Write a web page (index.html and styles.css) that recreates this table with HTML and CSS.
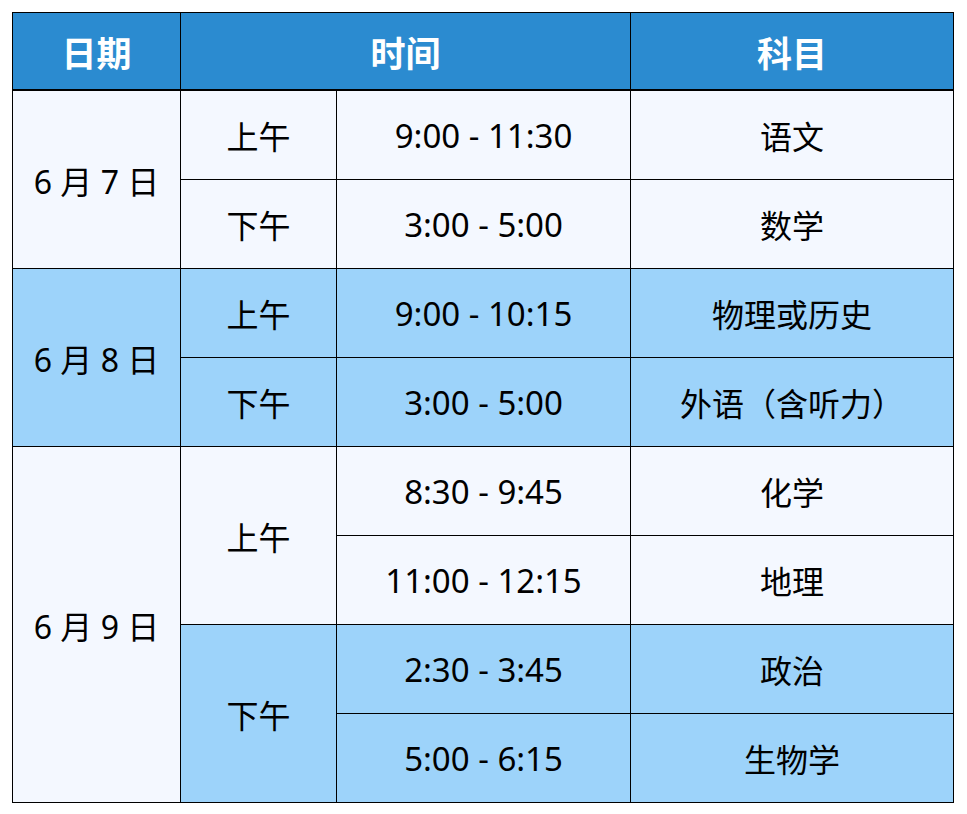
FILE: index.html
```html
<!DOCTYPE html>
<html lang="zh-CN">
<head>
<meta charset="utf-8">
<link rel="stylesheet" href="styles.css">
</head>
<body>
<div class="wrap">
<table class="sched">
  <colgroup>
    <col class="c1"><col class="c2"><col class="c3"><col class="c4">
  </colgroup>
  <thead>
    <tr class="head"><th>日期</th><th colspan="2">时间</th><th>科目</th></tr>
  </thead>
  <tbody>
    <tr><td class="light" rowspan="2">6 月 7 日</td><td class="light">上午</td><td class="light num">9:00 - 11:30</td><td class="light">语文</td></tr>
    <tr><td class="light">下午</td><td class="light num">3:00 - 5:00</td><td class="light">数学</td></tr>
    <tr><td class="blue" rowspan="2">6 月 8 日</td><td class="blue">上午</td><td class="blue num">9:00 - 10:15</td><td class="blue">物理或历史</td></tr>
    <tr><td class="blue">下午</td><td class="blue num">3:00 - 5:00</td><td class="blue">外语（含听力）</td></tr>
    <tr><td class="light" rowspan="4">6 月 9 日</td><td class="light" rowspan="2">上午</td><td class="light num">8:30 - 9:45</td><td class="light">化学</td></tr>
    <tr><td class="light num">11:00 - 12:15</td><td class="light">地理</td></tr>
    <tr><td class="blue" rowspan="2">下午</td><td class="blue num">2:30 - 3:45</td><td class="blue">政治</td></tr>
    <tr><td class="blue num">5:00 - 6:15</td><td class="blue">生物学</td></tr>
  </tbody>
</table>
</div>
</body>
</html>
```

FILE: styles.css
```css
html, body {
  margin: 0;
  padding: 0;
  background: #ffffff;
}
.wrap {
  padding: 12px 0 0 12px;
}
.sched {
  border-collapse: collapse;
  width: 941px;
  table-layout: fixed;
  font-family: "Noto Sans", "Noto Sans CJK SC", sans-serif;
  font-size: 32px;
  color: #000;
}
.c1 { width: 168px; }
.c2 { width: 156px; }
.c3 { width: 294px; }
.c4 { width: 323px; }
.sched th, .sched td {
  border: 1px solid #000;
  text-align: center;
  vertical-align: middle;
  padding: 0;
}
.sched td {
  height: 88px;
}
.head th {
  height: 76px;
  background: #2b8bd0;
  color: #fff;
  font-weight: 700;
  font-size: 35px;
  border-bottom: 2px solid #000;
}
.num { font-size: 33px; }
.light { background: #f4f8ff; }
.blue { background: #9dd3fa; }
```
